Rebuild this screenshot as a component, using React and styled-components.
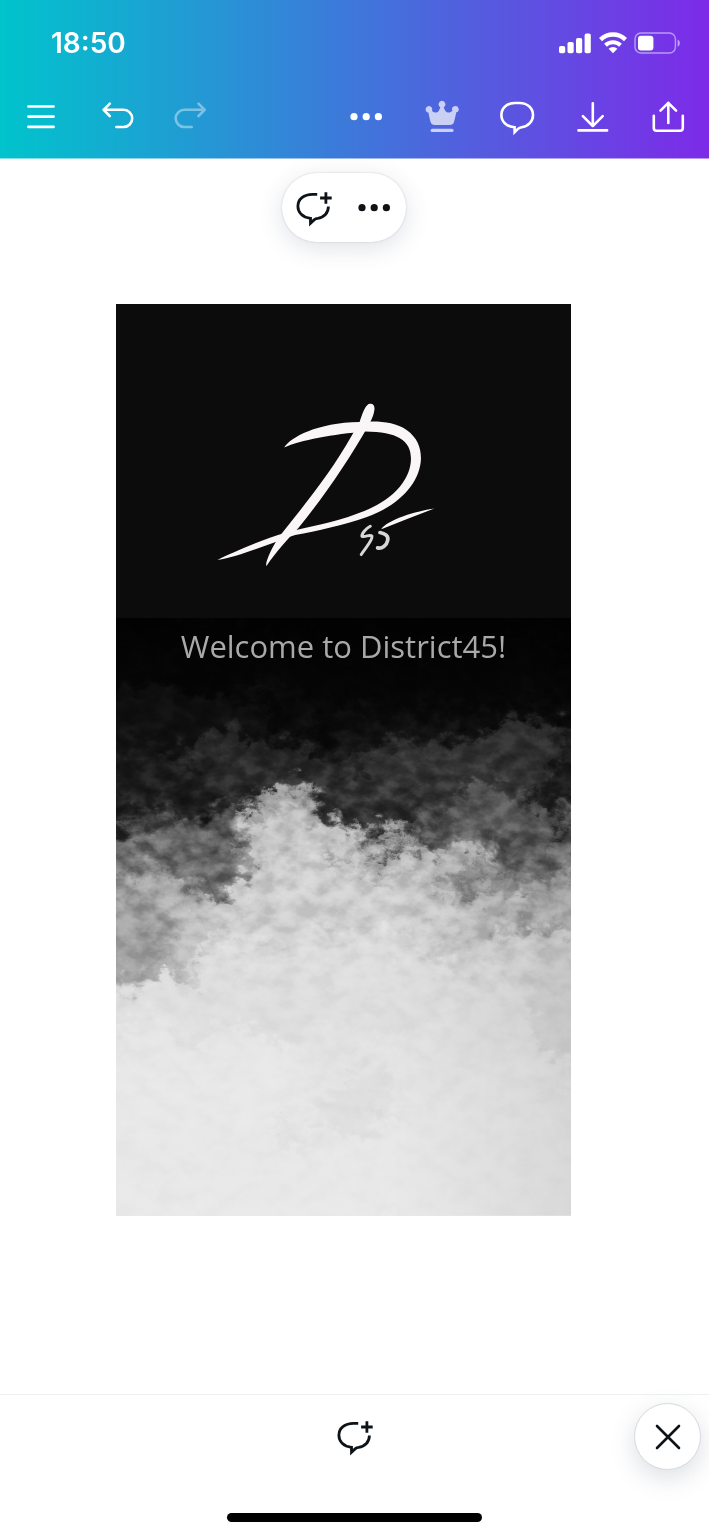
import React from "react";
import styled, { createGlobalStyle } from "styled-components";

const Global = createGlobalStyle`
  * { box-sizing: border-box; }
  body { margin: 0; background: #fff; font-family: Inter, "Liberation Sans", sans-serif; }
`;

const Page = styled.div`
  min-height: 100vh;
  display: flex;
  flex-direction: column;
  background: #fff;
`;

const Header = styled.header`
  color: #fff;
  background: linear-gradient(90deg, #00c4cc, #7d2ae8);
  border-bottom: 1px solid rgba(255, 255, 255, 0.5);
  padding: 26px 21px 21px;
`;

const StatusBar = styled.div`
  display: flex;
  align-items: center;
  justify-content: space-between;
  height: 34px;
  padding: 0 6px 0 30px;
  margin-bottom: 37px;
`;

const Time = styled.time`
  font-size: 28px;
  line-height: 34px;
  font-weight: 600;
`;

const StatusIcons = styled.div`
  display: flex;
  align-items: center;
  gap: 7px;
`;

const Toolbar = styled.nav`
  display: flex;
  justify-content: space-between;
`;

const ToolGroup = styled.div`
  display: flex;
  justify-content: space-between;
  flex: 0 1 ${(p) => p.$width}px;
`;

const IconButton = styled.button`
  display: grid;
  place-items: center;
  width: ${(p) => p.$width || 40}px;
  height: ${(p) => p.$height || 40}px;
  padding: 0;
  border: 0;
  background: none;
  color: inherit;
  cursor: pointer;
  &:disabled { opacity: 0.4; }
`;

const CloseButton = styled(IconButton)`
  justify-self: end;
  margin-right: 8px;
  border: 1px solid #d6d9df;
  border-radius: 50%;
  background: #fff;
  box-shadow: 0 8px 24px rgba(64, 75, 100, 0.18);
`;

const Glyph = styled.svg`
  display: block;
  width: ${(p) => p.$w || 40}px;
  height: ${(p) => p.$h || 40}px;
  fill: none;
  stroke: currentColor;
  stroke-width: 2.6;
  stroke-linecap: round;
  stroke-linejoin: round;
`;

const Stage = styled.main`
  flex: 1;
  display: flex;
  flex-direction: column;
  align-items: center;
  padding: 14px 22px 80px 0;
  color: #0e1318;
`;

const Pill = styled.div`
  display: flex;
  padding: 0 2px;
  border-radius: 35px;
  background: #fff;
  box-shadow: 0 0 2px rgba(64, 75, 100, 0.25), 0 6px 24px rgba(64, 75, 100, 0.16);
`;

const Artboard = styled.section`
  width: 66.3%;
  margin-top: 62px;
  background: #0c0c0c;
`;

const LogoArt = styled.svg`
  display: block;
  width: 100%;
  aspect-ratio: 455 / 314;
`;

const Banner = styled.div`
  position: relative;
  aspect-ratio: 455 / 597;
  padding-top: 8px;
  overflow: hidden;
`;

const Texture = styled.svg`
  position: absolute;
  inset: 0;
  width: 100%;
  height: 100%;
`;

const Title = styled.h1`
  position: relative;
  margin: 0;
  text-align: center;
  color: #a9a9a9;
  font: 400 31px/40px "Open Sans", "Noto Sans", sans-serif;
`;

const Footer = styled.footer`
  border-top: 1px solid #eff0f2;
  padding: 8px 0 14px;
  color: #0e1318;
`;

const FooterRow = styled.div`
  display: grid;
  grid-template-columns: 1fr auto 1fr;
  align-items: center;
  margin-bottom: 43px;
`;

const HomeIndicator = styled.div`
  width: 36%;
  height: 9px;
  margin: 0 auto;
  border-radius: 5px;
  background: #000;
`;

function Dots() {
  return (
    <Glyph viewBox="0 0 40 40">
      <g fill="currentColor" stroke="none">
        <circle cx="8" cy="19.7" r="3.6" />
        <circle cx="20.2" cy="19.7" r="3.6" />
        <circle cx="32.4" cy="19.7" r="3.6" />
      </g>
    </Glyph>
  );
}

function AddComment() {
  return (
    <Glyph viewBox="0 0 40 40">
      <path strokeLinecap="butt" strokeLinejoin="miter" strokeWidth="2.8" d="M23.2 6.3H18.500C9.800 6.300 3.900 11.200 3.900 18.300c0 6.200 4.600 11 12.600 12v4.900l3.600-3.300c1.200-1.100 2.200-1.500 3.600-1.600 6.300-.7 10.700-5.400 10.700-11.800" />
      <path d="M31.900 4.200v11.600M26.100 10h11.600" strokeLinecap="butt" strokeWidth="2.800" />
    </Glyph>
  );
}

// Soft clouds of the banner: [cx, cy, rx, ry, grey level, opacity]
const clouds = [
  [70, 100, 90, 26, 16, 0.8],
  [150, 140, 90, 26, 48, 0.6],
  [410, 142, 70, 30, 60, 0.7],
  [290, 158, 70, 22, 66, 0.5],
  [20, 180, 70, 40, 26, 0.9],
  [120, 176, 46, 14, 34, 0.8],
  [225, 180, 40, 20, 40, 0.8],
  [165, 198, 50, 26, 172, 0.95],
  [180, 235, 66, 38, 200, 0.95],
  [80, 214, 60, 20, 84, 0.7],
  [30, 242, 70, 24, 108, 0.8],
  [100, 250, 42, 24, 100, 0.8],
  [225, 290, 130, 46, 210, 0.9],
  [258, 196, 46, 26, 44, 0.95],
  [390, 200, 66, 30, 92, 0.95],
  [450, 172, 24, 38, 22, 0.9],
  [430, 240, 60, 20, 108, 0.8],
  [310, 236, 62, 20, 190, 0.9],
  [345, 275, 70, 20, 196, 0.7],
  [365, 266, 44, 7, 120, 0.8],
  [220, 246, 16, 5, 120, 0.7],
  [260, 258, 14, 16, 150, 0.5],
  [440, 300, 44, 24, 176, 0.6],
  [10, 322, 60, 44, 150, 0.8],
  [75, 345, 40, 30, 184, 0.7],
  [425, 316, 44, 6, 150, 0.7],
  [220, 370, 150, 54, 222, 0.9],
  [450, 385, 44, 60, 202, 0.5],
  [70, 470, 110, 60, 234, 0.6],
  [245, 480, 34, 30, 220, 0.7],
  [170, 520, 22, 14, 222, 0.7],
];

function BannerTexture() {
  return (
    <Texture viewBox="0 0 455 597" preserveAspectRatio="none" aria-hidden="true">
      <defs>
        <linearGradient id="fog" x1="0" y1="0" x2="0" y2="1">
          <stop offset="0" stopColor="#020202" />
          <stop offset="0.14" stopColor="#060606" />
          <stop offset="0.22" stopColor="#151515" />
          <stop offset="0.29" stopColor="#2c2c2c" />
          <stop offset="0.35" stopColor="#545354" />
          <stop offset="0.42" stopColor="#929192" />
          <stop offset="0.5" stopColor="#bebdbe" />
          <stop offset="0.6" stopColor="#dcdcdc" />
          <stop offset="0.8" stopColor="#e6e6e6" />
          <stop offset="1" stopColor="#e9e9e9" />
        </linearGradient>
        <linearGradient id="edge" x1="0" y1="0" x2="1" y2="0">
          <stop offset="0.6" stopColor="#000" stopOpacity="0" />
          <stop offset="1" stopColor="#000" stopOpacity="0.07" />
        </linearGradient>
        <linearGradient id="grainFade" x1="0" y1="0" x2="0" y2="1">
          <stop offset="0.1" stopColor="#fff" stopOpacity="0.1" />
          <stop offset="0.26" stopColor="#fff" stopOpacity="0.3" />
          <stop offset="0.4" stopColor="#fff" stopOpacity="0.5" />
          <stop offset="0.52" stopColor="#fff" stopOpacity="0.4" />
          <stop offset="0.66" stopColor="#fff" stopOpacity="0.16" />
          <stop offset="1" stopColor="#fff" stopOpacity="0.12" />
        </linearGradient>
        <mask id="grainMask">
          <rect width="455" height="597" fill="url(#grainFade)" />
        </mask>
        <filter id="smoke" x="-80" y="-80" width="620" height="760" filterUnits="userSpaceOnUse" colorInterpolationFilters="sRGB">
          <feGaussianBlur in="SourceGraphic" stdDeviation="6" result="soft" />
          <feTurbulence type="fractalNoise" baseFrequency="0.016 0.02" numOctaves="5" seed="8" result="broad" />
          <feDisplacementMap in="soft" in2="broad" scale="80" xChannelSelector="R" yChannelSelector="G" result="bent" />
          <feTurbulence type="fractalNoise" baseFrequency="0.07 0.09" numOctaves="4" seed="3" result="fine" />
          <feDisplacementMap in="bent" in2="fine" scale="38" xChannelSelector="G" yChannelSelector="R" />
        </filter>
        <filter id="grain" x="0" y="0" width="455" height="597" filterUnits="userSpaceOnUse" colorInterpolationFilters="sRGB">
          <feTurbulence type="fractalNoise" baseFrequency="0.05 0.07" numOctaves="6" seed="21" />
          <feColorMatrix values="2.2 0 0 0 -0.6  2.2 0 0 0 -0.6  2.2 0 0 0 -0.6  0 0 0 0 1" />
        </filter>
      </defs>
      <g filter="url(#smoke)">
        <rect x="-80" y="-80" width="620" height="90" fill="#020202" />
        <rect x="-80" width="620" height="597" fill="url(#fog)" />
        <rect x="-80" y="595" width="620" height="90" fill="#e9e9e9" />
        {clouds.map(([cx, cy, rx, ry, v, o], i) => (
          <ellipse key={i} cx={cx} cy={cy} rx={rx} ry={ry} fill={`rgb(${v},${v},${v})`} opacity={o} />
        ))}
      </g>
      <g mask="url(#grainMask)" style={{ mixBlendMode: "soft-light" }}>
        <rect width="455" height="597" filter="url(#grain)" />
      </g>
      <rect width="455" height="597" fill="url(#edge)" />
    </Texture>
  );
}

function BrushLogo() {
  return (
    <LogoArt viewBox="0 0 455 314" role="img" aria-label="District45 logo">
      <g transform="translate(84 86) scale(0.33333)" fill="#faf6f7">
        <path d="M252 172C272 142 350 98 478 96C525 92 580 92 620 120C650 142 662 170 662 205C660 275 600 345 500 380C430 404 350 422 285 434C210 458 120 500 52 509C100 486 180 450 258 427C320 411 400 398 470 371C575 335 632 270 632 205C632 150 590 125 495 124C400 132 300 150 252 172Z" />
        <path d="M478 96C486 72 493 50 505 42C518 38 525 46 522 62C520 76 514 88 508 100C440 220 370 320 294 414C268 440 228 484 199 527C193 522 214 470 240 436C320 335 390 250 456 134Z" />
        <path d="M543 417C556 396 620 368 702 355C650 376 600 394 543 417Z" />
      </g>
      <g transform="translate(84 86) scale(0.33333)" fill="none" stroke="#d9d6d7" strokeWidth="9" strokeLinecap="round" strokeLinejoin="round">
        <path d="M510 408C498 414 484 430 485 438C496 441 510 431 515 438C518 450 496 472 483 493" />
        <path d="M539 427C554 430 566 437 562 451C559 466 545 476 532 473" strokeWidth="11" />
      </g>
    </LogoArt>
  );
}

export default function App() {
  return (
    <Page>
      <Global />
      <Header>
        <StatusBar>
          <Time>18:50</Time>
          <StatusIcons>
            <Glyph $w={34} $h={22} viewBox="0 0 34 22">
              <g fill="currentColor" stroke="none">
                <rect x="1" y="14" width="6.2" height="7.3" rx="1.8" />
                <rect x="9.5" y="10" width="6.2" height="11.3" rx="1.8" />
                <rect x="18" y="6" width="6.2" height="15.3" rx="1.8" />
                <rect x="26.6" y="1.6" width="6.2" height="19.7" rx="1.8" />
              </g>
            </Glyph>
            <Glyph $w={28} $h={22} viewBox="0 0 28 22">
              <g strokeLinecap="butt" strokeWidth="4">
                <path d="M1.5 7.6a18 18 0 0 1 25 0" strokeWidth="4.4" />
                <path d="M6.5 13.2a10.8 10.8 0 0 1 15 0" />
              </g>
              <path d="M9.6 16.800a6.400 6.400 0 0 1 8.800 0L14 21.200z" fill="currentColor" stroke="none" />
            </Glyph>
            <Glyph $w={48} $h={22} viewBox="0 0 48 22">
              <rect x="1" y="1" width="40.4" height="20" rx="6" strokeWidth="1.4" opacity="0.5" />
              <rect x="4" y="3.8" width="15.4" height="14.6" rx="3" fill="currentColor" stroke="none" />
              <path d="M43.6 7.4c3 1.400 3 6 0 7.400z" fill="currentColor" stroke="none" opacity="0.55" />
            </Glyph>
          </StatusIcons>
        </StatusBar>
        <Toolbar aria-label="Editor">
          <ToolGroup $width={190}>
            <IconButton aria-label="Menu">
              <Glyph viewBox="0 0 40 40">
                <path d="M7.400 9.500h25.200M7.400 19.600h25.200M7.400 29.900h25.200" />
              </Glyph>
            </IconButton>
            <IconButton aria-label="Undo">
              <Glyph viewBox="0 0 40 40">
                <path d="M13.800 6.600L7.600 12.800l6.200 6.200M7.600 12.800h20a8.600 8.600 0 0 1 0 17.200h-7.200" />
              </Glyph>
            </IconButton>
            <IconButton aria-label="Redo" disabled>
              <Glyph viewBox="0 0 40 40">
                <path d="M27.500 6.600l6.200 6.200-6.200 6.200M33.700 12.800H13.300a8.600 8.600 0 0 0 0 17.200h7.400" />
              </Glyph>
            </IconButton>
          </ToolGroup>
          <ToolGroup $width={342}>
            <IconButton aria-label="More">
              <Dots />
            </IconButton>
            <IconButton aria-label="Premium">
              <Glyph viewBox="0 0 40 40">
                <g fill="currentColor" stroke="none" opacity="0.7">
                  <path d="M20 3.800a3.500 3.500 0 0 1 1.700 6.500c.8 2.600 2 4.900 4 5.200 2 .3 3.500-.5 4.700-1.700a3.300 3.300 0 1 1 3.800 1.800c-.7 3.200-1.200 6.400-2.200 9.300-.8 2.200-2 3-4.200 3H12.800c-2.200 0-3.400-.8-4.200-3-1-2.900-1.500-6.100-2.200-9.300a3.300 3.300 0 1 1 3.500-1.800c1.200 1.200 2.700 2 4.500 1.700 2-.3 3.100-2.600 3.900-5.200A3.500 3.500 0 0 1 20 3.800z" />
                  <rect x="8.600" y="31.700" width="23" height="3.400" rx="1.700" />
                </g>
              </Glyph>
            </IconButton>
            <IconButton aria-label="Comments">
              <Glyph viewBox="0 0 40 40">
                <path strokeLinejoin="miter" d="M18 6h4.400C30.800 6 36 11.300 36 18c0 6.400-4.600 11.300-11.400 12.200-1.700.2-2.600.7-3.600 1.700l-3.400 3.300v-4.900C9.600 29.700 4.400 24.800 4.400 18 4.400 11.300 9.600 6 18 6z" />
              </Glyph>
            </IconButton>
            <IconButton aria-label="Download">
              <Glyph viewBox="0 0 40 40">
                <path d="M19.800 6.200V29M9.900 19.200l9.900 9.900 9.900-9.900M5.500 33.400h28.600" />
              </Glyph>
            </IconButton>
            <IconButton aria-label="Share">
              <Glyph viewBox="0 0 40 40">
                <path d="M20.300 26V5.800M12.500 13.600l7.800-7.800 7.800 7.800M5.800 18.800V31a2.800 2.800 0 0 0 2.800 2.800h23.400a2.800 2.800 0 0 0 2.800-2.800V18.800" />
              </Glyph>
            </IconButton>
          </ToolGroup>
        </Toolbar>
      </Header>

      <Stage>
        <Pill>
          <IconButton $width={60} $height={69} aria-label="Add comment">
            <AddComment />
          </IconButton>
          <IconButton $width={60} $height={69} aria-label="More options">
            <Dots />
          </IconButton>
        </Pill>
        <Artboard>
          <BrushLogo />
          <Banner>
            <BannerTexture />
            <Title>Welcome to District45!</Title>
          </Banner>
        </Artboard>
      </Stage>

      <Footer>
        <FooterRow>
          <span />
          <IconButton aria-label="Add comment">
            <AddComment />
          </IconButton>
          <CloseButton $width={67} $height={67} aria-label="Close">
            <Glyph viewBox="0 0 40 40">
              <path d="M9 9l22 22M31 9L9 31" />
            </Glyph>
          </CloseButton>
        </FooterRow>
        <HomeIndicator />
      </Footer>
    </Page>
  );
}
